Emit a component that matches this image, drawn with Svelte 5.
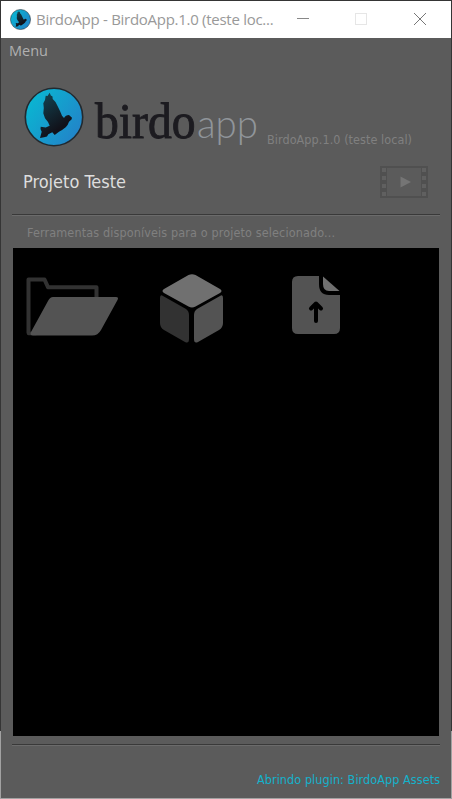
<script>
  const title = 'BirdoApp - BirdoApp.1.0 (teste loc...';
  const version = 'BirdoApp.1.0 (teste local)';
  const holes = [2, 10, 18, 26];
</script>

{#snippet badge(size)}
  <svg width={size} height={size} viewBox="0 0 60 60">
    <defs>
      <linearGradient id="sky{size}" x1="0" y1="0.15" x2="1" y2="0.85">
        <stop offset="0" stop-color="#08b9d2" />
        <stop offset="1" stop-color="#2480c8" />
      </linearGradient>
      <linearGradient id="bird{size}" x1="0.2" y1="0" x2="0.6" y2="0.8">
        <stop offset="0" stop-color="#12414f" />
        <stop offset="1" stop-color="#111119" />
      </linearGradient>
    </defs>
    <circle cx="30" cy="30" r="28.7" fill="url(#sky{size})" stroke="#222a30" stroke-width="1.6" />
    <path
      fill="url(#bird{size})"
      d="M25.700 5.700L26.800 8.500L28.500 9.500L28.700 12L31.500 15L33.300 18.500L36 24L38 28.700L40 31Q41.500 28 45 28L48 30.700L47.500 32.500L45 34.700Q44 38 41.700 40.300Q38 43.500 35 44.700L30.700 48L28.300 45.300L24.300 47.300L23 49.500L20 50.300L16 50.900L17.700 44.700L16.500 42L16.700 39.700L21.700 40.500L25.700 38.700L24 35L21 31.300L19.300 26.300L19.800 21L19.300 16.300L21 13L21.700 8.700L23.500 9Z"
    />
  </svg>
{/snippet}

<div class="window">
  <header class="titlebar">
    <span class="app-icon">{@render badge(21)}</span>
    <span class="title">{title}</span>
    <svg class="controls" width="160" height="37" viewBox="0 0 160 37" fill="none" shape-rendering="crispEdges">
      <path d="M6 17.5H18" stroke="#888" />
      <rect x="64.500" y="12.500" width="11" height="11" stroke="#e6e6e6" />
      <path d="M123 12L135 24M135 12L123 24" stroke="#777" shape-rendering="auto" />
    </svg>
  </header>
  <nav>Menu</nav>

  <main>
    <section class="brand">
      <span class="emblem">{@render badge(60)}</span>
      <div class="wordmark">
        <svg width="102" height="70"><text class="birdo" x="0" y="52" textLength="100.5" lengthAdjust="spacingAndGlyphs">birdo</text></svg>
        <svg width="64" height="70"><text class="app" x="0" y="51.5" textLength="61" lengthAdjust="spacingAndGlyphs">app</text></svg>
      </div>
      <svg class="version" width="150" height="20"><text x="1" y="14" textLength="145">{version}</text></svg>
    </section>

    <section class="project">
      <svg width="110" height="26"><text x="0" y="19" textLength="103" lengthAdjust="spacingAndGlyphs">Projeto Teste</text></svg>
      <svg class="film" width="48" height="32" viewBox="0 0 48 32">
        <path d="M0 0H48V32H0ZM7 2V30H41V2Z" fill="#505050" fill-rule="evenodd" />
        {#each holes as y}
          <rect x="2" {y} width="4" height="4" fill="#606060" />
          <rect x="42" {y} width="4" height="4" fill="#606060" />
        {/each}
        <path d="M20.500 10.500L31 16L20.500 21.500Z" fill="#757575" />
      </svg>
    </section>

    <hr />
    <div class="hint"><svg width="330" height="20"><text x="0" y="14" textLength="308">Ferramentas disponíveis para o projeto selecionado...</text></svg></div>

    <section class="tools">
      <svg class="folder" width="94" height="60" viewBox="0 0 94 60">
        <path d="M2.500 56V2.500H18.500L22 10.200H70.500V22" fill="none" stroke="#323232" stroke-width="4" stroke-linejoin="round" />
        <path d="M2.500 56.500H10" stroke="#323232" stroke-width="3.500" stroke-linecap="round" />
        <path d="M27 20H90Q93 20 91.500 23L75 53Q72 58.500 66 58.500H7Q3.500 58.500 5 55L22 24Q24 20 27 20Z" fill="#535353" />
      </svg>
      <svg class="cube" width="66" height="72" viewBox="0 0 66 72">
        <path d="M29.500 2Q33 .5 36.500 2L61 16Q64 18 61 20L36.500 33.500Q33 35.500 29.500 33.500L5 20Q2 18 5 16Z" fill="#707070" />
        <path d="M1 25Q1 21 4 23L27 36Q30 38 30 42V66Q30 71 26 69L5 57Q1 54.500 1 50Z" fill="#323232" />
        <path d="M64 25Q64 21 61 23L38 36Q35 38 35 42V66Q35 71 39 69L60 57Q64 54.500 64 50Z" fill="#535353" />
      </svg>
      <svg class="file" width="50" height="60" viewBox="0 0 50 60">
        <path d="M7 1H28V9Q28 20 38 20H49V53Q49 59 43 59H7Q1 59 1 53V7Q1 1 7 1Z" fill="#535353" />
        <path d="M32 1.500L48.500 16H38Q32 16 32 9Z" fill="#707070" />
        <path d="M25 46V28.500M20 33.500L25 28.500L30 33.500" fill="none" stroke="#000" stroke-width="4" stroke-linecap="round" stroke-linejoin="round" />
      </svg>
    </section>
    <hr class="lower" />
  </main>

  <footer><svg width="186" height="20"><text x="2" y="14" textLength="183">Abrindo plugin: BirdoApp Assets</text></svg></footer>
</div>

<style>
  :global(body) { margin: 0; }
  svg { display: block; flex: none; }
  .window {
    box-sizing: border-box;
    width: 452px;
    height: 799px;
    overflow: hidden;
    display: flex;
    flex-direction: column;
    padding: 1px 1px 1px;
    background:
      linear-gradient(#5b5b5b, #5b5b5b) 1px 1px / 450px 797px no-repeat,
      linear-gradient(#353535 731px, #a2a2a2 731px);
    color: #808080;
    font: 12px 'DejaVu Sans Condensed', 'DejaVu Sans', sans-serif;
  }
  .titlebar { display: flex; align-items: center; height: 37px; background: #fff; flex: none; }
  .app-icon { margin: 0 0 1px 9px; }
  .title {
    width: 240px;
    margin: 0 0 2px 5px;
    color: #999;
    font: 15px/20px 'Open Sans', 'Noto Sans', sans-serif;
    letter-spacing: -0.28px;
    white-space: nowrap;
  }
  .controls { margin-left: 18px; }
  nav { height: 27px; padding-left: 8px; color: #b0b0b0; font: 14.500px/26px 'Open Sans', sans-serif; flex: none; }
  main { margin: 0 11px; }
  .brand { display: flex; height: 91px; }
  .emblem { margin: 22px 0 0 12px; }
  .wordmark { display: flex; margin: 21px 0 0 11px; }
  .wordmark svg { overflow: visible; }
  .birdo { font: 51px 'Liberation Serif', serif; fill: #1c1b20; stroke: #1c1b20; stroke-width: 0.900px; }
  .app { font: 300 39px Lato, sans-serif; fill: #90959a; }
  .version { margin: 65px 0 0 5px; }
  text { fill: currentColor; }
  .version text, .hint text, footer text { font-size: 12.500px; }
  .project { display: flex; justify-content: space-between; height: 58px; color: #dedede; }
  .project > svg:first-child { margin: 13px 0 0 11px; }
  .project text { font-size: 17px; }
  .film { margin: 10px 12px 0 0; }
  hr { height: 1px; margin: 0; border: 0; border-top: 1px solid #393939; background: #6b6b6b; }
  .hint { height: 32px; padding: 7px 0 0 15px; box-sizing: border-box; }
  .tools { display: flex; box-sizing: border-box; height: 488px; margin: 0 1px; background: #000; }
  .folder { margin: 29px 0 0 13px; }
  .cube { margin: 25px 0 0 39px; }
  .file { margin: 27px 0 0 65.500px; }
  .lower { margin-top: 8px; }
  footer { display: flex; justify-content: flex-end; padding: 24px 10px 0 0; color: #14b2cb; }
</style>
